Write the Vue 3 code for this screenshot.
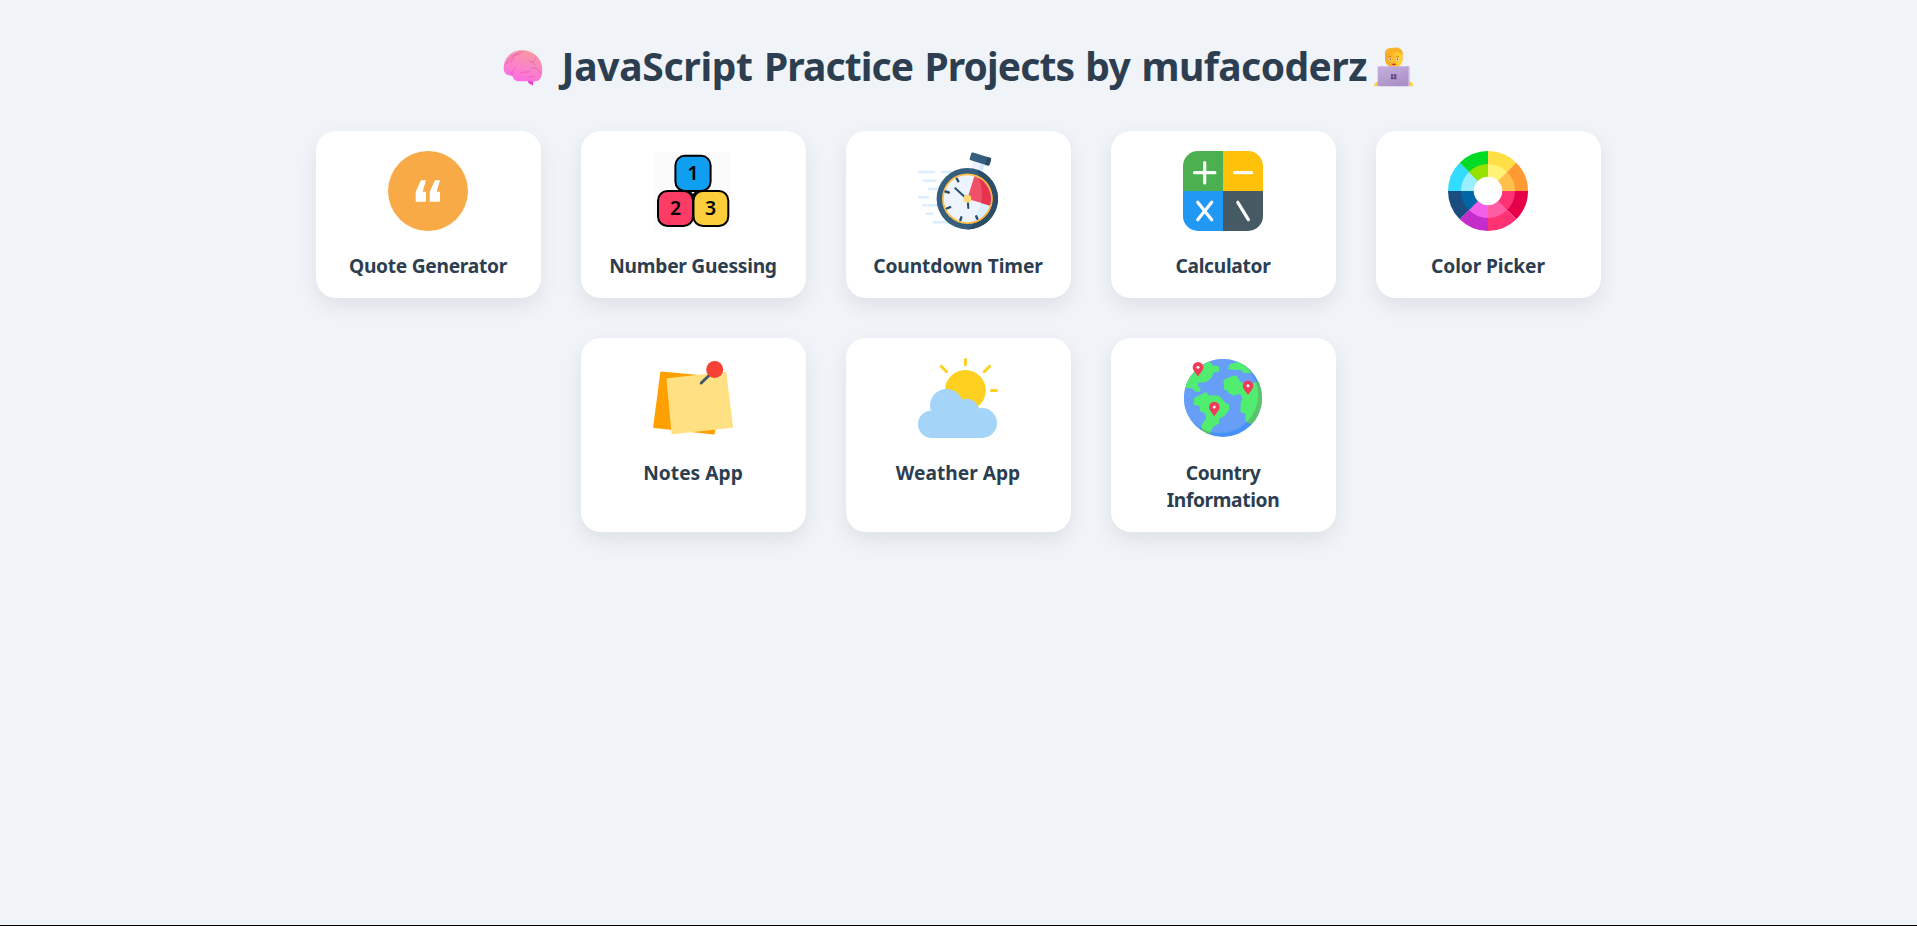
<script setup>
const headingWords = [
  { text: 'JavaScript', tracking: -0.3 },
  { text: 'Practice', tracking: -0.88 },
  { text: 'Projects', tracking: -0.88 },
  { text: 'by', tracking: -0.6 },
  { text: 'mufacoderz', tracking: -0.54 },
]

const projects = [
  { id: 'quote', label: 'Quote Generator', tracking: -0.29 },
  { id: 'numbers', label: 'Number Guessing', tracking: -0.26 },
  { id: 'timer', label: 'Countdown Timer', tracking: -0.07 },
  { id: 'calculator', label: 'Calculator', tracking: -0.3 },
  { id: 'color', label: 'Color Picker', tracking: -0.1 },
  { id: 'notes', label: 'Notes App', tracking: 0 },
  { id: 'weather', label: 'Weather App', tracking: 0 },
  { id: 'country', label: 'Country Information', tracking: -0.38 },
]

const wheel = [
  ['#ffde46', '#fff275'],
  ['#ff9a33', '#ffc04d'],
  ['#e60049', '#ff3374'],
  ['#ff3374', '#ff5ca4'],
  ['#c42dc9', '#f060ea'],
  ['#1a4c7f', '#0066a6'],
  ['#33dbff', '#99eeff'],
  ['#00db26', '#95e200'],
]

function sector(index, radius) {
  const point = (step) => {
    const angle = (step * Math.PI) / 4
    return `${(40 + radius * Math.sin(angle)).toFixed(2)} ${(40 - radius * Math.cos(angle)).toFixed(2)}`
  }
  return `M40 40L${point(index)}A${radius} ${radius} 0 0 1 ${point(index + 1)}Z`
}

const land = [
  'M26 3L30 7.5L36 8.5V13.5L30.5 14.5L28.5 20L23 24L15 25V28L17.5 30L17 34L12 33.5L9.5 30.5L2.5 29.5L-3 30V-3H26Z',
  'M47 6L53 4.5L62 2L76 15.5L71 15L61 15L57 11.5L52.5 12L45 11Z',
  'M40.5 22L50.5 17.5L54 18L57.5 24L65 27L74 23.5L82 24V70H72L67.5 66L62.5 63V56L57.5 54V45L59.5 40L57 36L49.5 37.5L41 31Z',
  'M23 34L26 37.5H36L41.5 44L46 46.5V52L42.5 57L36 61V65.500L30 69L26.500 77L19 75V66L23 60.500L22 55.500L17 53L16.500 48L11 47V40L19 36Z',
]

const pins = [[15, 9.3], [65, 27.7], [31.3, 49]]
</script>

<template>
  <main class="page">
    <h1 class="heading">
      <svg class="emoji" viewBox="0 0 40 40" aria-hidden="true">
        <defs>
          <linearGradient id="brain" x1=".75" y1="0" x2=".35" y2="1">
            <stop offset="0" stop-color="#fb9a9e" />
            <stop offset=".5" stop-color="#f986c4" />
            <stop offset="1" stop-color="#ff6be6" />
          </linearGradient>
        </defs>
        <path d="M24 33L26 36.500L30 38.500L30.500 32Z" fill="#f03fc4" />
        <path d="M.7 21C.5 12 8 3.300 18.500 3.300C30 3.300 39.600 11 39.300 23C39.300 29 37.500 34.300 32 34.300H17C12 34.300 10 32 9.500 29C4 28.500 1 27 .7 21Z" fill="url(#brain)" />
        <g fill="none" stroke="#df55a6" stroke-width=".9" stroke-linecap="round" stroke-opacity=".75">
          <path d="M3 17C7 12 9 7 16 7.500M8 15C11 8 15 5 19 5M9 28C8 24 11 22 13 21M26 14C29 16 31 15 33 11M30 15L32 18M18 26C23 24 25 26 27 24M29 21C33 21 36 22 37 26M25 30C28 31 29 28 32 29" />
        </g>
      </svg>
      <span class="heading-text"><template v-for="(word, i) in headingWords" :key="word.text">{{ i ? ' ' : '' }}<span :style="{ letterSpacing: word.tracking + 'px' }">{{ word.text }}</span></template></span>
      <svg class="emoji" viewBox="0 0 40 40" aria-hidden="true">
        <defs>
          <linearGradient id="laptop" x1="0" y1="0" x2=".5" y2="1">
            <stop offset="0" stop-color="#c7b0e0" />
            <stop offset="1" stop-color="#aa92c6" />
          </linearGradient>
          <linearGradient id="face" x1="0" y1="0" x2="1" y2="0">
            <stop offset="0" stop-color="#f9a528" />
            <stop offset="1" stop-color="#ffd42e" />
          </linearGradient>
        </defs>
        <path d="M0 39.300C.3 36 2 34.800 4.500 34.500V39.300ZM35 34.500C38 35 39.200 36.500 39.500 39.300H35Z" fill="#ffd04a" />
        <path d="M11 8C10 2 15 .5 18 1C22-.5 30 1 28.700 8V14H11Z" fill="#f9b32b" />
        <path d="M11.500 7C15 7 15 5 17 5H24C25 6 26 7 28 7.500V14C28 18 24 20.500 20 20.500S11.800 18 11.500 14Z" fill="url(#face)" />
        <path d="M14.500 10L17 9.500M22.500 9.500L25 10" stroke="#bd6c1c" stroke-width=".8" />
        <circle cx="16" cy="12.200" r="1.300" fill="#fff" /><circle cx="23.700" cy="12.200" r="1.300" fill="#fff" />
        <circle cx="16.200" cy="12.200" r=".8" fill="#533526" /><circle cx="23.500" cy="12.200" r=".8" fill="#533526" />
        <path d="M17.500 17Q20 16 22.300 17Q20 19.500 17.500 17Z" fill="#c82b50" />
        <rect x="3.700" y="19.300" width="31.700" height="20" rx="1" fill="url(#laptop)" />
        <path d="M34.700 20V39" stroke="#d0b9e4" />
        <path d="M17 27.300h2.400v2.200h-2.400zm3 0h2.400v2.200h-2.400zm-3 2.800h2.400v2.200h-2.400zm3 0h2.400v2.200h-2.400z" fill="#60407c" />
      </svg>
    </h1>

    <nav class="projects">
      <a v-for="project in projects" :key="project.id" class="card">
        <svg class="icon" viewBox="0 0 80 80" aria-hidden="true">
          <g v-if="project.id === 'quote'">
            <circle cx="40" cy="40" r="40" fill="#f7aa46" />
            <path d="M33 29.300H38L34.700 40.700H38V50.700H27.700V40.700ZM47 29.300H52L48.700 40.700H52V50.700H41.700V40.700Z" fill="#fff" />
          </g>

          <g v-else-if="project.id === 'numbers'">
            <rect x="1.500" y="1.500" width="76.500" height="76" fill="#fbfbfb" />
            <path d="M35 40H45L40 47Z" fill="#000" />
            <path d="M38.300 41H41.700L40 43Z" fill="#fff" />
            <g stroke="#000" stroke-width="2">
              <rect x="22.400" y="4.800" width="35.200" height="35.200" rx="9.500" fill="#109ff0" />
              <rect x="5" y="40" width="35" height="35" rx="9.500" fill="#fc3c64" />
              <rect x="40.500" y="40" width="34.800" height="35" rx="9.500" fill="#fdce3c" />
            </g>
            <g class="digits">
              <text x="40" y="29">1</text>
              <text x="22.500" y="64">2</text>
              <text x="57.500" y="64">3</text>
            </g>
          </g>

          <g v-else-if="project.id === 'timer'">
            <path d="M1 21H16.300M24 21H38M6 29.700H17.300M11 38H24M1 46.200H10M5.300 54.300H22M8.700 62.700H14.500M15.500 71.300H32" stroke="#daeeff" stroke-width="2.400" stroke-linecap="round" />
            <path d="M56 8L53 19L63 23L67.500 11Z" fill="#edf4ff" />
            <path d="M63 10L60.500 20L64 22L67.500 11Z" fill="#d4eaff" />
            <g transform="rotate(17 62.300 8)">
              <rect x="52" y="4" width="20.800" height="8" rx="1.500" fill="#365e7d" />
              <path d="M68.500 4H71.300Q72.800 4 72.800 5.500V10.500Q72.800 12 71.300 12H68.500Z" fill="#2b4d66" />
            </g>
            <circle cx="49.300" cy="47.700" r="30.700" fill="#365e7d" />
            <path d="M58.500 18.400A30.700 30.700 0 0 1 49.300 78.400C66 68 71 40 58.500 18.400Z" fill="#2b4d66" />
            <circle cx="49.300" cy="47.700" r="25.300" fill="#ffc04a" />
            <path d="M62 25.800A25.300 25.300 0 0 1 53 72.700C65 60 68 43 62 25.800Z" fill="#ffae42" />
            <circle cx="49.300" cy="47.700" r="23.500" fill="#edf4ff" />
            <path d="M62 27.900A23.500 23.500 0 0 1 55 70.500C64 58 66 42 62 27.900Z" fill="#d9eeff" />
            <path d="M49.300 47.700L56.400 25.300A23.500 23.500 0 0 1 71.900 54.500Z" fill="#ee5168" />
            <path d="M61 27.200A23.500 23.500 0 0 1 71.900 54.500L63.200 51.900C64.500 43 64 34 61 27.200Z" fill="#e6344f" />
            <path d="M38.800 27.700L40.300 30.300M27.500 40.500L30.800 41.500M28.800 57.500L32.200 56.200M43.300 66.300L42.400 69M58.200 65.300L59.300 67.800" stroke="#2c506b" stroke-width="2.400" stroke-linecap="round" />
            <path d="M37.300 37.300L47 46.200M49.700 49L50.300 57" stroke="#2c506b" stroke-width="2.100" stroke-linecap="round" />
            <circle cx="49.300" cy="47.700" r="4" fill="#ffda79" />
          </g>

          <g v-else-if="project.id === 'calculator'">
            <path d="M40 0V40H0V15A15 15 0 0 1 15 0Z" fill="#4caf50" />
            <path d="M40 0H65A15 15 0 0 1 80 15V40H40Z" fill="#ffc10a" />
            <path d="M0 40H40V80H15A15 15 0 0 1 0 65Z" fill="#2298f5" />
            <path d="M40 40H80V65A15 15 0 0 1 65 80H40Z" fill="#465a64" />
            <path d="M11.500 21.700H31.900M21.700 11.500V31.900M51.600 21.700H68.500M14.700 51.300L28.700 68.700M28.700 51.300L14.700 68.700M54.800 51.300L65.400 68.700" stroke="#fafafa" stroke-width="3.200" stroke-linecap="round" />
          </g>

          <g v-else-if="project.id === 'color'">
            <path v-for="(pair, i) in wheel" :key="'o' + i" :d="sector(i, 40)" :fill="pair[0]" />
            <path v-for="(pair, i) in wheel" :key="'i' + i" :d="sector(i, 27)" :fill="pair[1]" />
            <circle cx="40" cy="40" r="14.300" fill="#fff" />
          </g>

          <g v-else-if="project.id === 'notes'" stroke-width="2" stroke-linejoin="round">
            <path d="M8.300 14.500L67.500 20L60.800 75.500L1.200 69Z" fill="#ffa000" stroke="#ffa000" />
            <path d="M14.500 21.200L72.300 14.700L79 68.700L19.500 75.300Z" fill="#ffe082" stroke="#ffe082" />
            <path d="M48.200 25L56 17.500" stroke="#455a64" stroke-width="3" stroke-linecap="round" />
            <circle cx="61.700" cy="11.500" r="8.500" fill="#f44336" />
          </g>

          <g v-else-if="project.id === 'weather'">
            <path d="M47.400 1.500V6.800M23.200 8.300L28.700 13.700M71.700 8.300L66.200 13.700M73.500 32.400H78.500" stroke="#fdd020" stroke-width="3" stroke-linecap="round" />
            <circle cx="47.400" cy="32.400" r="20.400" fill="#fdd020" />
            <g fill="#a4d4f8">
              <circle cx="28.500" cy="47.500" r="16.500" />
              <circle cx="48.500" cy="53.500" r="12.700" />
              <circle cx="64" cy="65" r="15" />
              <circle cx="13.700" cy="66.300" r="13.700" />
              <path d="M13.500 53L40 45L60 52L64 80H13.500Z" />
            </g>
          </g>

          <g v-else>
            <defs>
              <clipPath id="globe"><circle cx="40" cy="40" r="39" /></clipPath>
              <clipPath id="globe-lit"><circle cx="37" cy="37" r="38.200" /></clipPath>
            </defs>
            <g clip-path="url(#globe)">
              <path d="M0 0H80V80H0Z" fill="#4591f5" />
              <path v-for="d in land" :key="d" :d="d" fill="#5bc466" />
              <g clip-path="url(#globe-lit)">
                <path d="M0 0H80V80H0Z" fill="#669ef8" />
                <path v-for="d in land" :key="d" :d="d" fill="#50ed71" />
              </g>
            </g>
            <g v-for="[x, y] in pins" :key="x" :transform="`translate(${x} ${y})`">
              <path d="M-5.300 0A5.300 5.300 0 0 1 5.300 0C5.300 3.200 2 6 0 9.200C-2 6-5.300 3.200-5.300 0Z" fill="#f03c59" />
              <circle r="1.500" fill="#fff" />
            </g>
          </g>
        </svg>
        <span class="label" :style="{ letterSpacing: project.tracking + 'px' }">{{ project.label }}</span>
      </a>
    </nav>
  </main>
</template>

<style>
body {
  margin: 0;
}
</style>

<style scoped>
.page {
  box-sizing: border-box;
  min-height: 926px;
  padding: 40px;
  border-bottom: 1px solid #000;
  background: #f0f4f8;
  color: #2c3e50;
  font-family: "Noto Sans", "Open Sans", sans-serif;
}

.heading {
  display: flex;
  justify-content: center;
  align-items: center;
  height: 53px;
  margin: 0 0 38px;
  font-size: 39px;
  font-weight: 700;
  line-height: 53px;
}

.heading-text {
  margin: -2px 7px 0 18.5px;
  letter-spacing: -0.78px;
  word-spacing: 1.8px;
  white-space: nowrap;
}

.emoji {
  flex: none;
  width: 40px;
  height: 40px;
}

.projects {
  display: flex;
  flex-wrap: wrap;
  justify-content: center;
  gap: 40px;
  max-width: 1300px;
  margin: 0 auto;
}

.card {
  display: flex;
  flex-direction: column;
  align-items: center;
  gap: 21px;
  box-sizing: border-box;
  width: 225px;
  padding: 20px 21px 19px 20px;
  border-radius: 20px;
  background: #fff;
  box-shadow: 0 8px 20px rgba(0, 0, 0, 0.08);
  text-align: center;
}

.icon {
  flex: none;
  width: 80px;
  height: 80px;
}

.label {
  max-width: 185px;
  font-size: 19.2px;
  font-weight: 700;
  line-height: 27px;
}

.digits {
  font-size: 19.5px;
  font-weight: 600;
  text-anchor: middle;
}
</style>
